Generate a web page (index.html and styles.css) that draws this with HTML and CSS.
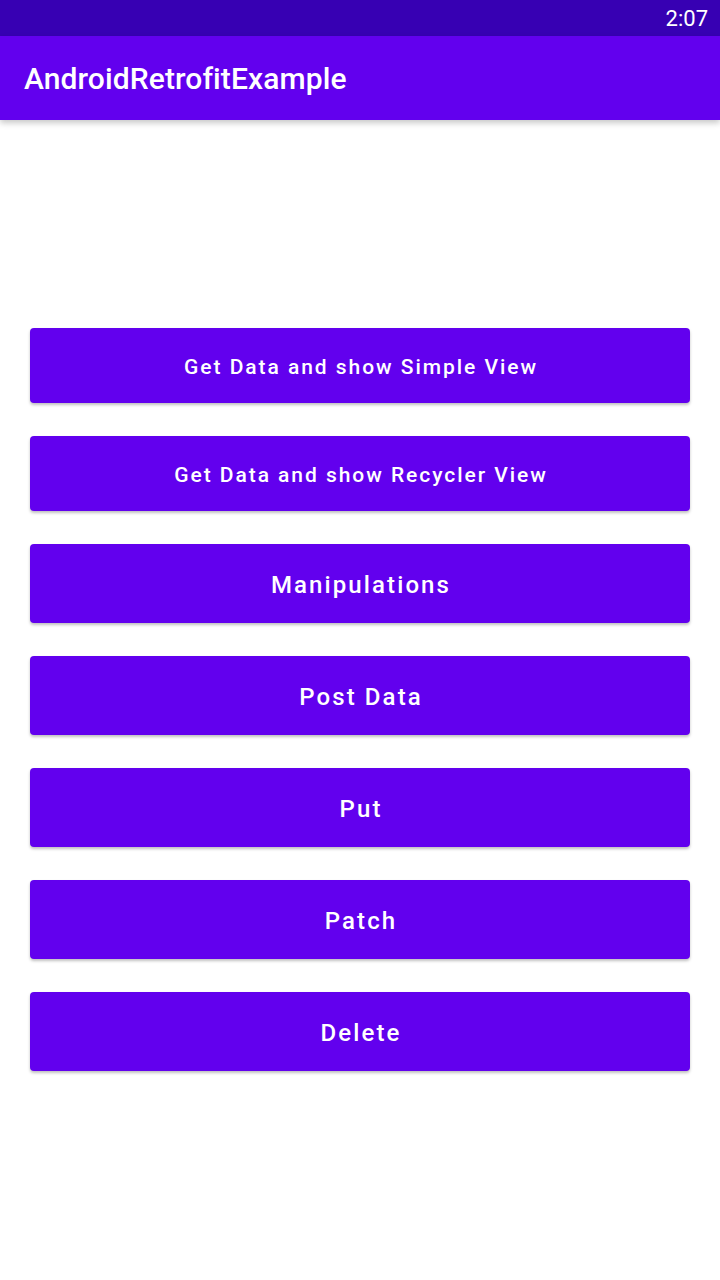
FILE: index.html
```html
<!DOCTYPE html>
<html>
<head>
<meta charset="utf-8">
<link rel="stylesheet" href="styles.css">
</head>
<body>
<div class="status-bar"><span class="time">2:07</span></div>
<header class="app-bar"><h1 class="title">AndroidRetrofitExample</h1></header>
<main class="content">
  <button class="btn btn-small">Get Data and show Simple View</button>
  <button class="btn btn-small">Get Data and show Recycler View</button>
  <button class="btn btn-large">Manipulations</button>
  <button class="btn btn-large">Post Data</button>
  <button class="btn btn-large">Put</button>
  <button class="btn btn-large">Patch</button>
  <button class="btn btn-large">Delete</button>
</main>
</body>
</html>
```

FILE: styles.css
```css
html, body {
  margin: 0;
  padding: 0;
  background: #ffffff;
  font-family: Roboto, "Noto Sans", sans-serif;
}
body {
  width: 720px;
  height: 1280px;
  overflow: hidden;
}
.status-bar {
  height: 36px;
  background: #3700b3;
  display: flex;
  align-items: center;
  justify-content: flex-end;
  padding-right: 12px;
}
.time {
  color: #ffffff;
  font-size: 22px;
  font-weight: 400;
}
.app-bar {
  position: relative;
  height: 84px;
  background: #6200ee;
  display: flex;
  align-items: center;
  padding-left: 24px;
  box-shadow: 0 3px 6px rgba(0, 0, 0, 0.22);
  z-index: 1;
}
.title {
  margin: 0;
  color: #ffffff;
  font-size: 30px;
  font-weight: 500;
  letter-spacing: 0.1px;
}
.content {
  display: flex;
  flex-direction: column;
  gap: 33px;
  padding: 208px 30px 0 30px;
}
.btn {
  border: none;
  background: #6200ee;
  color: #ffffff;
  border-radius: 4px;
  font-family: Roboto, "Noto Sans", sans-serif;
  font-weight: 500;
  box-shadow: 0 2px 3px rgba(0, 0, 0, 0.25);
  padding: 3px 0 0 2px;
  width: 100%;
}
.btn-small {
  height: 75px;
  font-size: 21px;
  letter-spacing: 1.95px;
}
.btn-large {
  height: 79px;
  font-size: 24px;
  letter-spacing: 2.1px;
}
```
